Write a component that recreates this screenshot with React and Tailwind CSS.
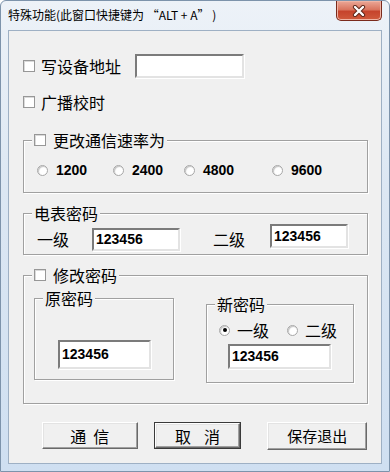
const CJK = "font-['Noto_Sans_CJK_SC',sans-serif]";
const NUM = "font-['Liberation_Sans',Arial,sans-serif] font-bold text-[14px]";

function CheckBox() {
  return (
    <span className="inline-block shrink-0 w-[12px] h-[12px] bg-white border border-[#979797] shadow-[inset_1px_1px_0_#dadada]" />
  );
}

function Radio({ checked }) {
  return (
    <span className="flex shrink-0 items-center justify-center w-[11px] h-[11px] rounded-full bg-white border border-[#a7a7a7] shadow-[inset_1px_1px_1px_#c4c4c4]">
      {checked && <span className="w-[4px] h-[4px] rounded-full bg-black" />}
    </span>
  );
}

function Field({ value, className = "" }) {
  return (
    <div
      className={
        "flex items-center pl-[2px] bg-white border-2 border-[#e3e3e3] border-t-[#7b7b7b] border-l-[#7b7b7b] shadow-[1px_1px_0_#ffffff] " +
        NUM +
        " " +
        className
      }
    >
      {value}
    </div>
  );
}

function Group({ title, className = "", children }) {
  return (
    <div
      className={
        "relative border border-[#a0a0a0] shadow-[inset_1px_1px_0_#ffffff,1px_1px_0_#ffffff] " + className
      }
    >
      <div className="absolute -top-[10px] left-[8px] flex items-center gap-[7px] h-[18px] px-[2px] bg-[#f0f0f0] text-[16px] leading-[18px]">
        {title}
      </div>
      {children}
    </div>
  );
}

function Button({ def, className = "", children }) {
  const inner = (
    <div className="flex h-full w-full items-center justify-center bg-[#f0f0f0] border border-t-white border-l-white border-r-[#696969] border-b-[#696969] shadow-[inset_-1px_-1px_0_#a0a0a0,inset_1px_1px_0_#e3e3e3] text-[16px] leading-[20px]">
      {children}
    </div>
  );
  if (def) {
    return <div className={"border border-[#3a3a3a] " + className}>{inner}</div>;
  }
  return <div className={className}>{inner}</div>;
}

function CloseButton() {
  return (
    <div className="absolute top-0 right-[7px] flex items-center justify-center w-[46px] h-[20px] rounded-b-[5px] border border-t-0 border-[#7a2a1c] bg-[linear-gradient(#eba898_0%,#d9755f_45%,#c6442c_55%,#d05a3c_100%)] shadow-[inset_0_0_0_1px_#f0b4a4]">
      <svg width="14" height="12" viewBox="0 0 14 12">
        <path d="M3 2 L11 10 M11 2 L3 10" stroke="#5a2418" strokeWidth="4.2" strokeLinecap="round" />
        <path d="M3 2 L11 10 M11 2 L3 10" stroke="#ffffff" strokeWidth="2.4" strokeLinecap="round" />
      </svg>
    </div>
  );
}

export default function App() {
  return (
    <div className={"w-[390px] h-[472px] flex flex-col bg-[linear-gradient(#edf2f8,#dce7f3_40%,#cfdff1)] border border-[#7d93ab] rounded-t-[6px] text-black " + CJK}>
      {/* title bar */}
      <div className="relative h-[29px] shrink-0">
        <div className="pl-[7px] pt-[6px] text-[12px] leading-[16px] text-black">
          特殊功能(此窗口快捷键为 “ALT + A” )
        </div>
        <CloseButton />
      </div>

      {/* client area */}
      <div className="mx-[7px] h-[434px] bg-[#f0f0f0] border border-[#9eb0c4] pl-[14px] pr-[14px]">
        {/* 写设备地址 */}
        <div className="mt-[23px] flex items-center h-[24px]">
          <CheckBox />
          <span className="ml-[6px] text-[16px] leading-[20px]">写设备地址</span>
          <Field value="" className="ml-[14px] w-[109px] h-[24px]" />
        </div>

        {/* 广播校时 */}
        <div className="mt-[14px] flex items-center h-[20px]">
          <CheckBox />
          <span className="ml-[6px] text-[16px] leading-[20px]">广播校时</span>
        </div>

        {/* 更改通信速率为 */}
        <Group
          className="mt-[28px] w-[345px] h-[53px]"
          title={
            <>
              <CheckBox />
              <span>更改通信速率为</span>
            </>
          }
        >
          <div className="flex items-center h-[20px] mt-[19px] pl-[13px]">
            {[
              ["1200", "w-[76px]"],
              ["2400", "w-[71px]"],
              ["4800", "w-[88px]"],
              ["9600", "w-[70px]"],
            ].map(([v, w]) => (
              <div key={v} className={"flex items-center gap-[8px] " + w}>
                <Radio />
                <span className={NUM}>{v}</span>
              </div>
            ))}
          </div>
        </Group>

        {/* 电表密码 */}
        <Group className="mt-[20px] w-[345px] h-[42px]" title={<span>电表密码</span>}>
          <div className="flex items-start mt-[14px] pl-[13px]">
            <span className="w-[55px] mt-[1px] text-[16px] leading-[20px]">一级</span>
            <Field value="123456" className="w-[88px] h-[23px]" />
            <span className="ml-[33px] w-[57px] mt-[1px] text-[16px] leading-[20px]">二级</span>
            <Field value="123456" className="-mt-[4px] w-[78px] h-[24px]" />
          </div>
        </Group>

        {/* 修改密码 */}
        <Group
          className="mt-[20px] w-[345px] h-[129px]"
          title={
            <>
              <CheckBox />
              <span>修改密码</span>
            </>
          }
        >
          <div className="flex items-start mt-[22px] pl-[10px]">
            <Group className="w-[140px] h-[82px]" title={<span>原密码</span>}>
              <Field value="123456" className="mt-[41px] ml-[23px] w-[93px] h-[29px]" />
            </Group>
            <Group className="ml-[32px] mt-[6px] w-[148px] h-[79px]" title={<span>新密码</span>}>
              <div className="flex items-center h-[20px] mt-[15px] pl-[12px] text-[16px] leading-[20px]">
                <Radio checked />
                <span className="ml-[7px]">一级</span>
                <span className="ml-[18px]">
                  <Radio />
                </span>
                <span className="ml-[7px]">二级</span>
              </div>
              <Field value="123456" className="mt-[4px] ml-[21px] w-[103px] h-[25px]" />
            </Group>
          </div>
        </Group>

        {/* buttons */}
        <div className="mt-[18px] flex items-start pl-[19px]">
          <Button className="w-[96px] h-[27px]">
            <span className="flex gap-[7px]">
              <span>通</span>
              <span>信</span>
            </span>
          </Button>
          <Button def className="ml-[16px] w-[88px] h-[27px]">
            <span className="flex gap-[13px]">
              <span>取</span>
              <span>消</span>
            </span>
          </Button>
          <Button className="ml-[26px] w-[100px] h-[28px]">
            <span className="text-[15px]">保存退出</span>
          </Button>
        </div>
      </div>
    </div>
  );
}
